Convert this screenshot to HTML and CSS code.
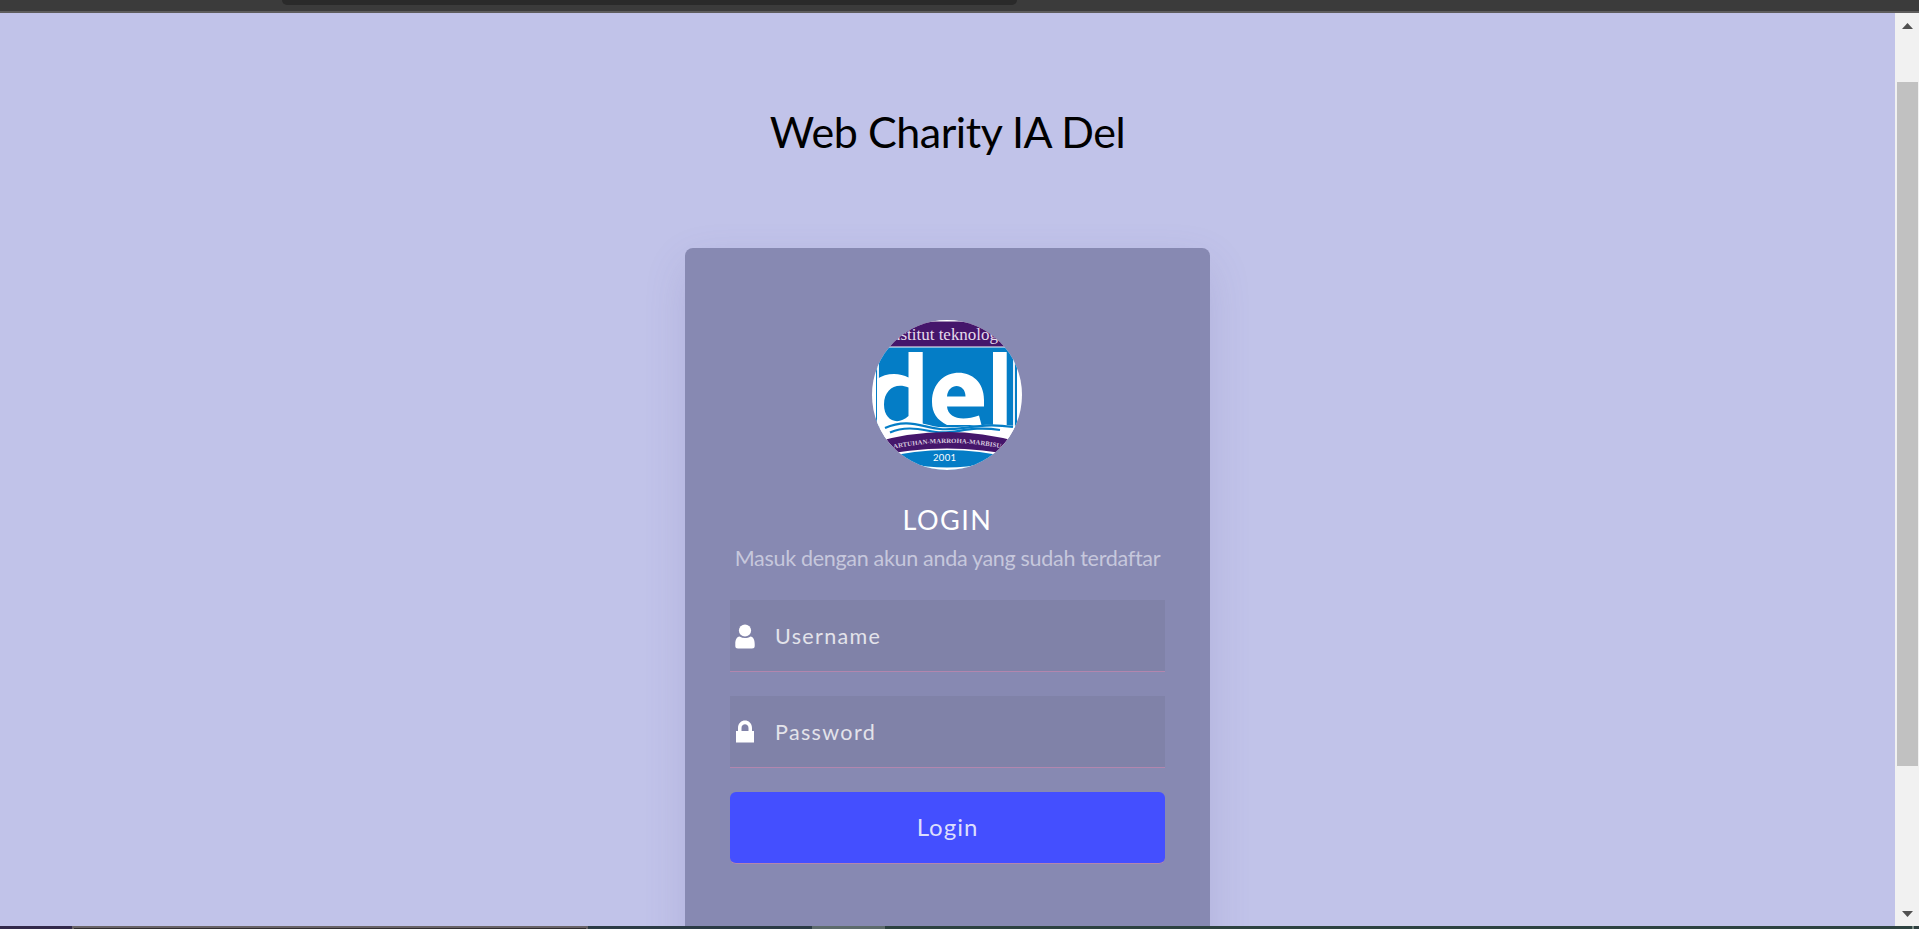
FILE: index.html
```html
<!DOCTYPE html>
<html lang="id">
<head>
<meta charset="utf-8">
<title>Web Charity IA Del</title>
<link rel="stylesheet" href="styles.css">
</head>
<body>
<div class="browser-bar"><div class="address"></div></div>
<div class="viewport">
  <main class="page">
    <h1 class="title">Web Charity IA Del</h1>
    <section class="card">
      <svg class="logo" viewBox="0 0 150 150" role="img" aria-label="Institut Teknologi Del">
        <defs>
          <clipPath id="round"><circle cx="75" cy="75" r="75"/></clipPath>
          <path id="motto" d="M8 132 Q75 114 146 132"/>
        </defs>
        <g clip-path="url(#round)">
          <rect width="150" height="150" fill="#fff"/>
          <rect y="1.500" width="150" height="25" fill="#45166b"/>
          <rect x="4" y="27.500" width="141" height="80" fill="#047dc6"/>
          <path d="M6 27V108M142 27V108" stroke="#fff" stroke-width="1.800"/>
          <text class="logo-top" x="20" y="19.500" textLength="106" lengthAdjust="spacingAndGlyphs">nstitut teknolog</text>
          <g fill="#fff" fill-rule="evenodd">
            <path d="M36.500 32H50.700V106H5V59C13 53 27 52 36.500 57.500ZM36.500 67.500C24 62 12 69 12 84.500C12 101 26 106 36.500 96Z"/>
            <path d="M112 86.500H75C76 99 91 101 107 95.500L109.500 105H75C65 100 60 93 60 82C60 44 112 43 112 80ZM75 76.500H93.500C93.500 62.500 76 62.500 75 76.500Z"/>
            <path d="M121 32H134.700V107H121Z"/>
            <path d="M4 107C22 100 38 101 57 105C82 112 100 101 145 106V128H0V107Z"/>
          </g>
          <g fill="none" stroke="#047dc6" stroke-width="2.200">
            <path d="M13 108C35 98 50 107 68 109C90 111 105 102 141 107"/>
            <path d="M18 112.500C35 105 50 110 64 112C82 115 97 105 128 110"/>
          </g>
          <path d="M0 123Q75 101 150 123V137Q75 120 0 137Z" fill="#45166b"/>
          <path d="M10 138Q75 122 140 138V150H10Z" fill="#047dc6"/>
          <path d="M35 143Q75 152 115 143V150H35Z" fill="#fff"/>
          <text class="logo-motto"><textPath href="#motto" startOffset="14" textLength="108" lengthAdjust="spacingAndGlyphs">ARTUHAN-MARROHA-MARBISU</textPath></text>
          <text class="logo-year" x="61" y="140.500" textLength="23">2001</text>
        </g>
      </svg>
      <h2 class="heading">LOGIN</h2>
      <p class="hint">Masuk dengan akun anda yang sudah terdaftar</p>
      <form class="form">
        <label class="field">
          <svg class="icon" viewBox="0 0 20 25"><path d="M4.500 12.500C1.500 13 .3 16 .3 20V22Q.3 24.500 3 24.500H17Q19.700 24.500 19.700 22V20C19.700 16 18.500 13 15.500 12.500C12 14.500 8 14.500 4.500 12.500Z"/><circle cx="10" cy="6.500" r="6.100"/></svg>
          <input class="input" type="text" placeholder="Username">
        </label>
        <label class="field">
          <svg class="icon" viewBox="0 0 20 25"><path fill-rule="evenodd" d="M1 11H3V8C3 -2 17 -2 17 8V11H19V22.500H1ZM6.500 11H13.500V8C13.500 3 6.500 3 6.500 8Z"/></svg>
          <input class="input" type="password" placeholder="Password">
        </label>
        <button class="submit" type="button">Login</button>
      </form>
    </section>
  </main>
  <div class="scrollbar">
    <svg class="arrow" viewBox="0 0 11 6"><path d="M0 6L5.500 0L11 6Z"/></svg>
    <div class="thumb"></div>
    <svg class="arrow arrow-down" viewBox="0 0 11 6"><path d="M0 0L5.500 6L11 0Z"/></svg>
  </div>
</div>
<div class="taskbar"><div class="task-start"></div><div class="task-search"></div><div class="task-gap"></div><div class="task-active"></div><div class="task-rest"></div><div class="task-desktop"></div></div>
</body>
</html>
```
FILE: styles.css
```css
* { box-sizing: border-box; }
body {
  margin: 0;
  height: 929px;
  display: flex;
  flex-direction: column;
  overflow: hidden;
  font-family: Lato, sans-serif;
}
.browser-bar { flex: none; height: 13px; background: #3b3b3b; border-bottom: 2px solid #5e5d5d; }
.address { width: 735px; height: 5px; margin-left: 282px; background: #2a2a2a; border-radius: 0 0 5px 5px; }
.viewport { flex: none; height: 913px; display: flex; overflow: hidden; }
.page {
  flex: 1;
  background: #c1c3e9;
  display: flex;
  flex-direction: column;
  align-items: center;
  padding-top: 92px;
}
.title { margin: 0 0 89px; font-size: 43px; line-height: 54px; font-weight: 400; letter-spacing: -.45px; color: #000; white-space: nowrap; }
.card {
  flex: none;
  width: 525px;
  height: 760px;
  padding: 72px 45px;
  display: flex;
  flex-direction: column;
  align-items: center;
  background: #8789b2;
  border-radius: 8px;
  box-shadow: 0 15px 45px -4px rgba(100, 90, 160, .2);
}
.logo { width: 150px; height: 150px; flex: none; margin-right: 1px; }
.logo-top { font: 16px "Liberation Serif", serif; fill: #e5dcec; }
.logo-motto { font: 700 6.500px "Liberation Serif", serif; fill: #d5c6df; }
.logo-year { font: 9.500px Lato, sans-serif; fill: #fff; }
.heading { margin: 32px 0 0; font-size: 27px; line-height: 36px; font-weight: 400; letter-spacing: 1.500px; color: #fff; }
.hint { margin: 4px 0 0; font-size: 21.500px; line-height: 32px; letter-spacing: -.31px; color: #c6c7dc; white-space: nowrap; }
.form { width: 435px; margin-top: 26px; display: flex; flex-direction: column; gap: 24px; }
.field {
  height: 72px;
  padding-left: 5px;
  display: flex;
  align-items: center;
  gap: 20px;
  background: #8082a8;
  border-bottom: 1px solid #b286ae;
}
.icon { width: 20px; height: 25px; flex: none; margin-top: 2px; fill: #fff; }
.input {
  flex: 1;
  min-width: 0;
  height: 71px;
  padding: 0;
  border: 0;
  outline: 0;
  background: none;
  font: 21.500px Lato, sans-serif;
  letter-spacing: 1.350px;
  color: #fff;
}
.input::placeholder { color: #e3e3ea; opacity: 1; }
.submit {
  height: 72px;
  padding: 0 0 2px;
  border: 0;
  border-bottom: 1px solid #b286ae;
  border-radius: 6px;
  background: #444fff;
  color: #dcdefc;
  font: 24px Lato, sans-serif;
  letter-spacing: 1px;
}
.scrollbar { width: 24px; background: #f1f1f1; display: flex; flex-direction: column; align-items: center; padding: 10px 0 9px; }
.arrow { width: 11px; height: 6px; flex: none; fill: #505050; }
.thumb { width: 21px; height: 684px; margin-top: 53px; background: #c1c1c1; }
.arrow-down { margin-top: auto; }
.taskbar { height: 3px; display: flex; background: #2f4040; }
.task-start { width: 72px; background: #32294a; }
.task-search { width: 516px; background: #302d30; border: 2px solid #696367; border-bottom: 0; }
.task-gap { width: 224px; background: #2b3b45; }
.task-active { width: 73px; background: #5d6b6c; }
.task-rest { flex: 1; background: #2d4240; }
.task-desktop { width: 7px; border-left: 2px solid #7b8b85; }
```
